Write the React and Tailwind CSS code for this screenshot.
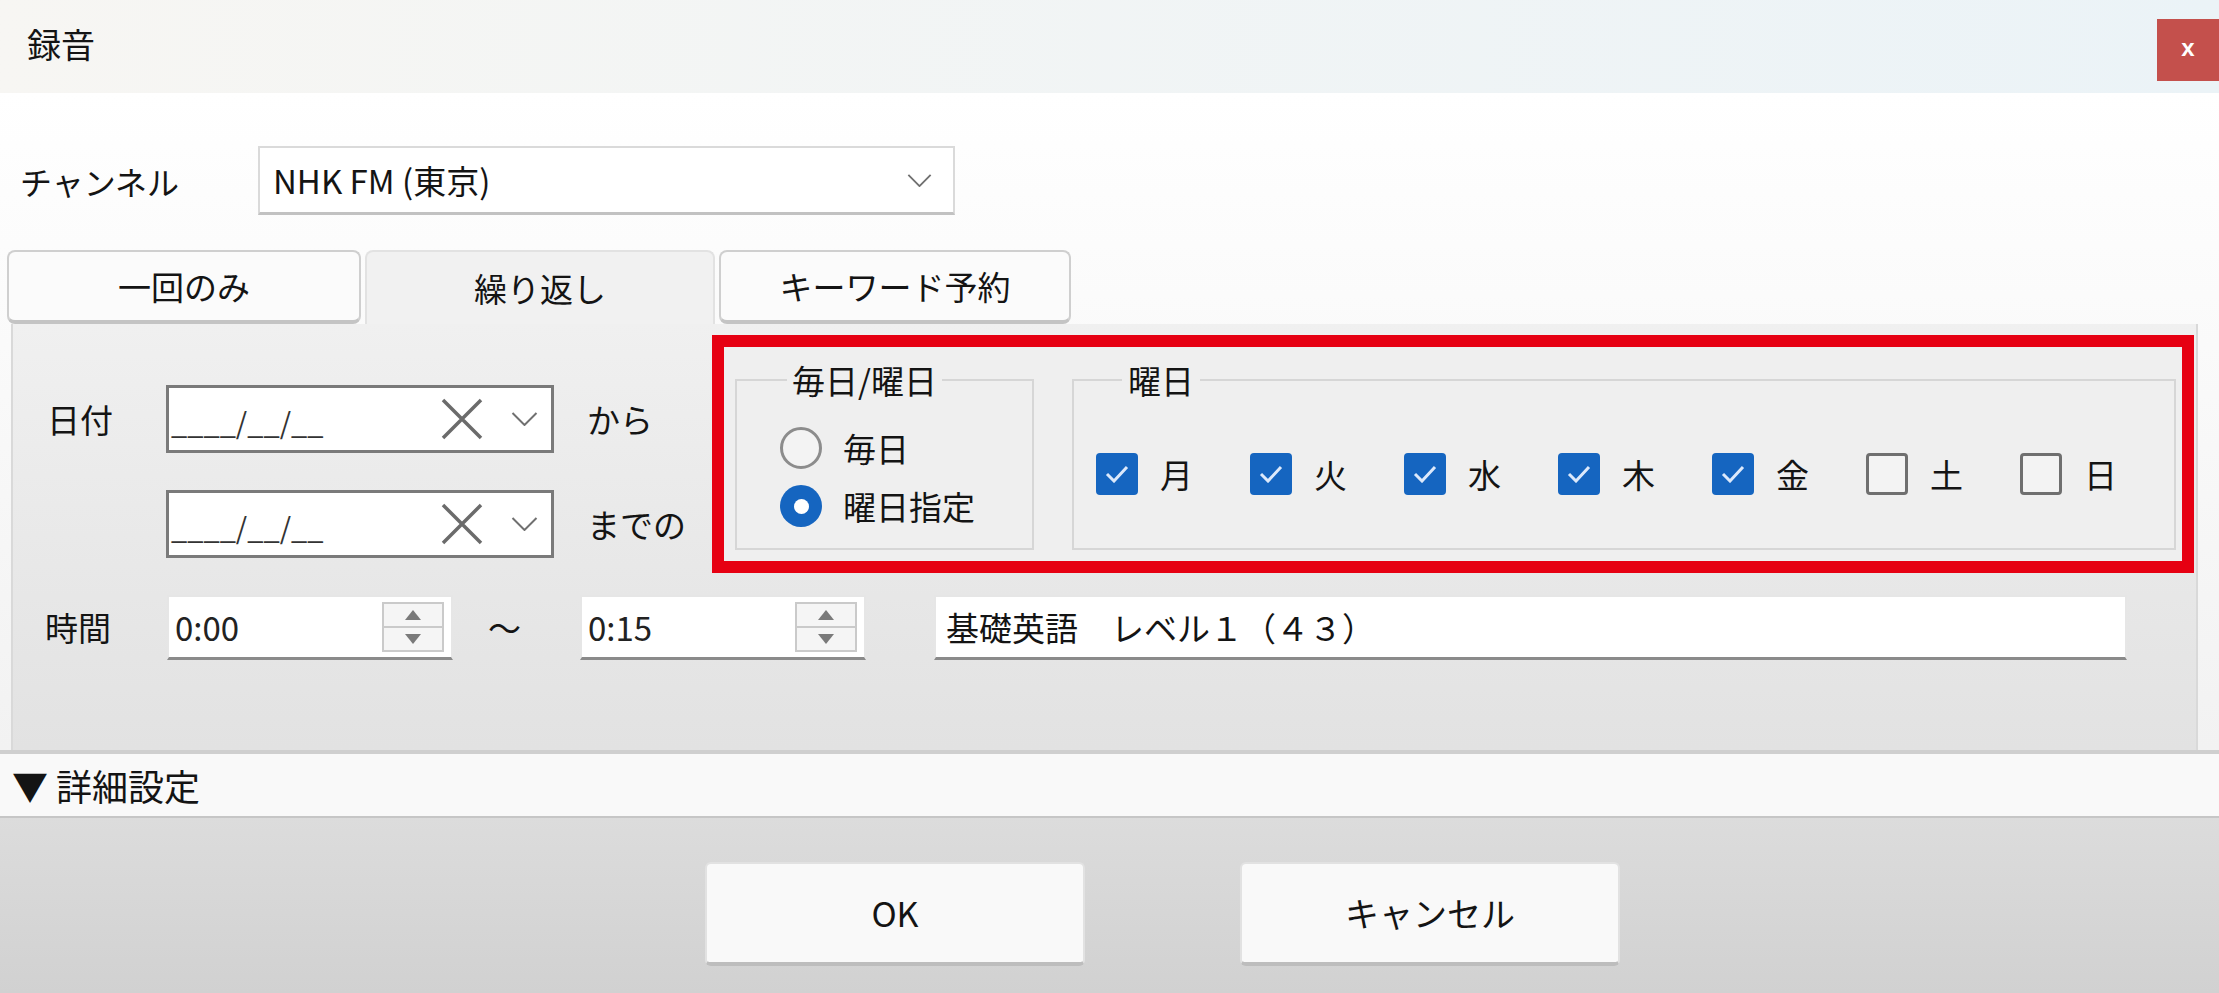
import React from 'react';

const DAYS = [
  { label: '月', checked: true },
  { label: '火', checked: true },
  { label: '水', checked: true },
  { label: '木', checked: true },
  { label: '金', checked: true },
  { label: '土', checked: false },
  { label: '日', checked: false },
];

function Chevron({ className }) {
  return (
    <svg viewBox="0 0 26 14" className={className} fill="none" stroke="#707070" strokeWidth="2">
      <path d="M1 1l12 12L25 1" />
    </svg>
  );
}

function DateBox() {
  return (
    <div className="flex h-[68px] w-[388px] items-center border-[3px] border-[#7a7a7a] bg-white pl-[2px] pr-[13px]">
      <span className="flex-1 pt-[4px] text-[29px] leading-none text-[#333]">____/__/__</span>
      <svg viewBox="0 0 42 42" className="h-[42px] w-[42px]" stroke="#6b6b6b" strokeWidth="3.5">
        <path d="M2 2l38 38M40 2L2 40" />
      </svg>
      <Chevron className="ml-[28px] h-[14px] w-[27px]" />
    </div>
  );
}

function TimeBox({ value }) {
  return (
    <div className="flex h-[65px] w-[286px] items-center border-2 border-b-[3px] border-[#e6e6e6] border-b-[#8a8a8a] bg-white pl-[6px] pr-[7px]">
      <span className="flex-1 text-[33px] leading-none text-[#222]">{value}</span>
      <div className="flex h-[50px] w-[62px] flex-col border-2 border-[#cacaca] bg-[#f5f5f5]">
        <div className="flex flex-1 items-center justify-center border-b-2 border-[#cacaca]">
          <svg viewBox="0 0 16 10" className="h-[10px] w-[16px]">
            <path d="M8 0L16 10H0z" fill="#7a7a7a" />
          </svg>
        </div>
        <div className="flex flex-1 items-center justify-center">
          <svg viewBox="0 0 16 10" className="h-[10px] w-[16px]">
            <path d="M0 0h16L8 10z" fill="#7a7a7a" />
          </svg>
        </div>
      </div>
    </div>
  );
}

function Radio({ label, checked }) {
  return (
    <div className="flex h-[42px] items-center">
      {checked ? (
        <span className="flex h-[42px] w-[42px] items-center justify-center rounded-full bg-[#1565c0]">
          <span className="h-[15px] w-[15px] rounded-full bg-white" />
        </span>
      ) : (
        <span className="h-[42px] w-[42px] rounded-full border-[3px] border-[#8c8c8c] bg-[#f3f3f3]" />
      )}
      <span className="ml-[21px] text-[33px] leading-none">{label}</span>
    </div>
  );
}

function Day({ label, checked }) {
  return (
    <div className="flex w-[154px] shrink-0 items-center">
      {checked ? (
        <span className="flex h-[42px] w-[42px] items-center justify-center rounded-[4px] bg-[#1565c0]">
          <svg viewBox="0 0 24 18" className="h-[18px] w-[24px]" fill="none" stroke="#dce9fb" strokeWidth="3">
            <path d="M2 9l7 7L22 2" />
          </svg>
        </span>
      ) : (
        <span className="h-[42px] w-[42px] rounded-[4px] border-[3px] border-[#6f6f6f] bg-[#f3f3f3]" />
      )}
      <span className="ml-[22px] text-[33px] leading-none">{label}</span>
    </div>
  );
}

export default function App() {
  return (
    <div className="flex h-[993px] w-[2219px] flex-col overflow-hidden text-[#141414] [font-family:'Noto_Sans_CJK_JP','Noto_Sans',sans-serif]">
      {/* title bar */}
      <div className="flex h-[93px] shrink-0 items-start justify-between bg-linear-to-r from-[#f7f6f3] to-[#ebf3f7]">
        <div className="pl-[27px] pt-[24px] text-[34px] leading-[40px]">録音</div>
        <div className="mt-[19px] flex h-[62px] w-[62px] items-center justify-center bg-[#c4504c] pb-[4px] text-[24px] font-bold leading-none text-white [font-family:'Liberation_Sans',sans-serif]">
          x
        </div>
      </div>

      {/* main */}
      <div className="flex h-[657px] shrink-0 flex-col bg-linear-to-b from-white to-[#f2f2f2]">
        <div className="mt-[53px] flex h-[69px] items-center">
          <div className="w-[258px] pl-[20px] text-[32px] leading-none">チャンネル</div>
          <div className="flex h-[69px] w-[697px] items-center border-2 border-b-[3px] border-[#dadada] border-b-[#c2c2c2] bg-white pl-[13px] pr-[21px]">
            <span className="flex-1 text-[33px] leading-none">NHK FM (東京)</span>
            <Chevron className="h-[13px] w-[25px]" />
          </div>
        </div>

        <div className="mt-[35px] flex h-[74px] gap-[4px] pl-[7px]">
          <div className="flex w-[354px] items-center justify-center rounded-[8px] border-2 border-b-[4px] border-[#cfcfcf] border-b-[#c4c4c4] bg-[#fbfbfb] text-[33px] leading-none">
            一回のみ
          </div>
          <div className="flex w-[350px] items-center justify-center rounded-t-[8px] border-2 border-b-0 border-[#e2e2e2] bg-[#f1f1f1] text-[33px] leading-none">
            繰り返し
          </div>
          <div className="flex w-[352px] items-center justify-center rounded-[8px] border-2 border-b-[4px] border-[#cfcfcf] border-b-[#c4c4c4] bg-[#fbfbfb] text-[33px] leading-none">
            キーワード予約
          </div>
        </div>

        <div className="ml-[11px] flex w-[2187px] flex-1 flex-col border-x-2 border-[#d9d9d9] bg-linear-to-b from-[#f0f0f0] to-[#e2e2e2] pt-[11px]">
          <div className="flex items-start">
            <div className="mt-[50px] w-[699px] pl-[34px]">
              <div className="flex h-[68px] items-center">
                <span className="w-[119px] text-[33px] leading-none">日付</span>
                <DateBox />
                <span className="ml-[33px] text-[33px] leading-none">から</span>
              </div>
              <div className="mt-[37px] flex h-[68px] items-center">
                <span className="w-[119px]" />
                <DateBox />
                <span className="ml-[33px] text-[33px] leading-none">までの</span>
              </div>
            </div>

            <div className="flex h-[238px] w-[1482px] gap-[38px] border-[12px] border-[#e60012] bg-[#efefef] pl-[11px] pt-[15px]">
              <fieldset className="h-[188px] w-[299px] border-2 border-[#d6d6d6]">
                <legend className="ml-[50px] px-[5px] text-[33px] leading-[36px]">毎日/曜日</legend>
                <div className="mt-[29px] flex flex-col gap-[16px] pl-[43px]">
                  <Radio label="毎日" checked={false} />
                  <Radio label="曜日指定" checked />
                </div>
              </fieldset>
              <fieldset className="h-[188px] w-[1099px] border-2 border-[#d6d6d6]">
                <legend className="ml-[48px] px-[6px] text-[33px] leading-[36px]">曜日</legend>
                <div className="mt-[55px] flex pl-[22px]">
                  {DAYS.map((d) => (
                    <Day key={d.label} label={d.label} checked={d.checked} />
                  ))}
                </div>
              </fieldset>
            </div>
          </div>

          <div className="mt-[22px] flex h-[65px] items-center pl-[32px]">
            <span className="w-[122px] text-[33px] leading-none">時間</span>
            <TimeBox value="0:00" />
            <span className="w-[127px] pl-[35px] text-[33px] leading-none">～</span>
            <TimeBox value="0:15" />
            <div className="ml-[68px] flex h-[65px] w-[1193px] items-center border-2 border-b-[3px] border-[#e6e6e6] border-b-[#8a8a8a] bg-white pl-[10px] text-[33px] leading-none">
              基礎英語　レベル１（４３）
            </div>
          </div>
        </div>
      </div>

      {/* expander */}
      <div className="flex h-[68px] shrink-0 items-center border-t-4 border-b-2 border-[#cfcfcf] border-b-[#c6c6c6] bg-[#f9f9f9] pl-[12px] text-[36px] leading-none">
        ▼ 詳細設定
      </div>

      {/* buttons */}
      <div className="flex flex-1 gap-[155px] bg-linear-to-b from-[#dcdcdc] to-[#d1d1d1] pl-[705px] pt-[44px]">
        <div className="flex h-[104px] w-[380px] items-center justify-center rounded-[6px] border-2 border-b-[4px] border-[#e2e2e2] border-b-[#bdbdbd] bg-[#f9f9f9] text-[34px] leading-none">
          OK
        </div>
        <div className="flex h-[104px] w-[380px] items-center justify-center rounded-[6px] border-2 border-b-[4px] border-[#e2e2e2] border-b-[#bdbdbd] bg-[#f9f9f9] text-[34px] leading-none">
          キャンセル
        </div>
      </div>
    </div>
  );
}
